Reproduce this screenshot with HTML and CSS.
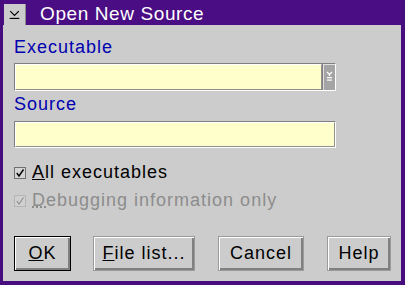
FILE: index.html
```html
<!DOCTYPE html>
<html lang="en">
<head>
  <meta charset="UTF-8" />
  <title>Open New Source</title>
  <link rel="stylesheet" href="styles.css">
</head>
<body>
  <div class="window">
    <div class="titlebar">
      <div class="sysmenu">
        <svg width="22" height="21" viewBox="0 0 22 21">
          <path d="M6.5 7 L11 11.5 L15.5 7" fill="none" stroke="#000" stroke-width="1.3"/>
          <rect x="6" y="14" width="10" height="1.2" fill="#000"/>
        </svg>
      </div>
      <span class="title">Open New Source</span>
    </div>
    <div class="content">
      <label class="field-label">Executable</label>
      <div class="combo">
        <div class="entry"></div>
        <div class="drop">
          <svg class="drop-glyph" width="11" height="14" viewBox="0 0 11 14">
            <path d="M3 2 L5.5 4.5 L8 2" fill="none" stroke="#fff" stroke-width="1.2"/>
            <rect x="4.9" y="4" width="1.2" height="2" fill="#fff"/>
            <rect x="3" y="7" width="5" height="1.2" fill="#fff"/>
            <rect x="3" y="9.5" width="5" height="1.2" fill="#fff"/>
          </svg>
        </div>
      </div>
      <label class="field-label second">Source</label>
      <div class="field"><div class="entry"></div></div>

      <div class="check first">
        <span class="box">
          <svg width="12" height="12" viewBox="0 0 12 12">
            <rect x="0.5" y="0.5" width="11" height="11" fill="#d4d4d4" stroke="#707070"/>
            <path d="M2.8 6 L5 9 L9.5 2.5" fill="none" stroke="#000" stroke-width="1.4"/>
          </svg>
        </span>
        <span><u>A</u>ll executables</span>
      </div>
      <div class="check disabled">
        <span class="box">
          <svg width="12" height="12" viewBox="0 0 12 12">
            <rect x="0.5" y="0.5" width="11" height="11" fill="#d0d0d0" stroke="#9a9a9a" stroke-dasharray="1 1"/>
            <path d="M2.8 6 L5 9 L9.5 2.5" fill="none" stroke="#909090" stroke-width="1.2"/>
          </svg>
        </span>
        <span><u>D</u>ebugging information only</span>
      </div>

      <div class="buttons">
        <button class="btn default ok"><u>O</u>K</button>
        <button class="btn files"><u>F</u>ile list...</button>
        <button class="btn cancel">Cancel</button>
        <button class="btn help">Help</button>
      </div>
    </div>
  </div>
</body>
</html>
```

FILE: styles.css
```css
* { box-sizing: border-box; margin: 0; padding: 0; }
html, body { width: 405px; height: 285px; overflow: hidden; }
body {
  font-family: 'Liberation Sans', Arial, sans-serif;
  font-size: 18px;
  letter-spacing: 1px;
  color: #000;
  background: #cccccc;
}
.window {
  width: 405px;
  height: 285px;
  background: #cccccc;
  border-left: 3px solid #470c7e;
  border-right: 4px solid #470c7e;
  border-bottom: 4px solid #470c7e;
  display: flex;
  flex-direction: column;
}
.titlebar {
  height: 25px;
  background: #4a0d84;
  display: flex;
  align-items: flex-start;
}
.sysmenu {
  width: 22px; height: 21px;
  margin: 4px 0 0 1px;
  background: #cccccc;
  border-right: 1px solid #8a8a8a;
  display: flex;
}
.title {
  color: #fff;
  font-size: 19px;
  letter-spacing: 0.6px;
  margin: 3px 0 0 14px;
  line-height: 22px;
}
.content {
  padding: 12px 0 0 11px;
  display: flex;
  flex-direction: column;
}
.field-label {
  color: #0000b0;
  line-height: 20px;
  display: block;
}
.field-label.second { margin-top: 3px; }
.combo {
  margin-top: 6px;
  width: 322px; height: 28px;
  display: flex;
  border: 1px solid;
  border-color: #808080 #fff #fff #808080;
}
.entry {
  flex: 1;
  background: #ffffcc;
  border: 1px solid;
  border-color: #fff #909090 #909090 #fff;
}
.drop {
  width: 13px;
  flex-shrink: 0;
  background: #a4a4a4;
  border-left: 1px solid #808080;
  box-shadow: inset 1px 1px #e0e0e0;
  display: flex;
  align-items: center;
  justify-content: center;
}
.drop-glyph { flex-shrink: 0; }
.field {
  margin-top: 7px;
  width: 322px; height: 27px;
  display: flex;
  border: 1px solid;
  border-color: #808080 #fff #fff #808080;
}
.check {
  display: flex;
  align-items: center;
  line-height: 20px;
  gap: 6px;
}
.check .box { display: flex; width: 12px; height: 12px; margin-top: 1px; }
.check.first { margin-top: 14px; }
.check.disabled { margin-top: 8px; color: #8c8c8c; }
.check.disabled u { text-decoration-style: dotted; }
.buttons {
  margin-top: 26px;
  display: flex;
  gap: 22px;
}
.btn {
  font: inherit;
  letter-spacing: 1px;
  height: 35px;
  background: #cccccc;
  color: #000;
  border: 1px solid #9a9a9a;
  box-shadow: inset 1px 1px #fff, inset -2px -2px #808080;
  cursor: pointer;
}
.btn.default { border-color: #000; }
.ok { width: 57px; }
.files { width: 102px; }
.cancel { width: 86px; margin-left: 1px; }
.help { width: 64px; margin-left: 1px; }
```
